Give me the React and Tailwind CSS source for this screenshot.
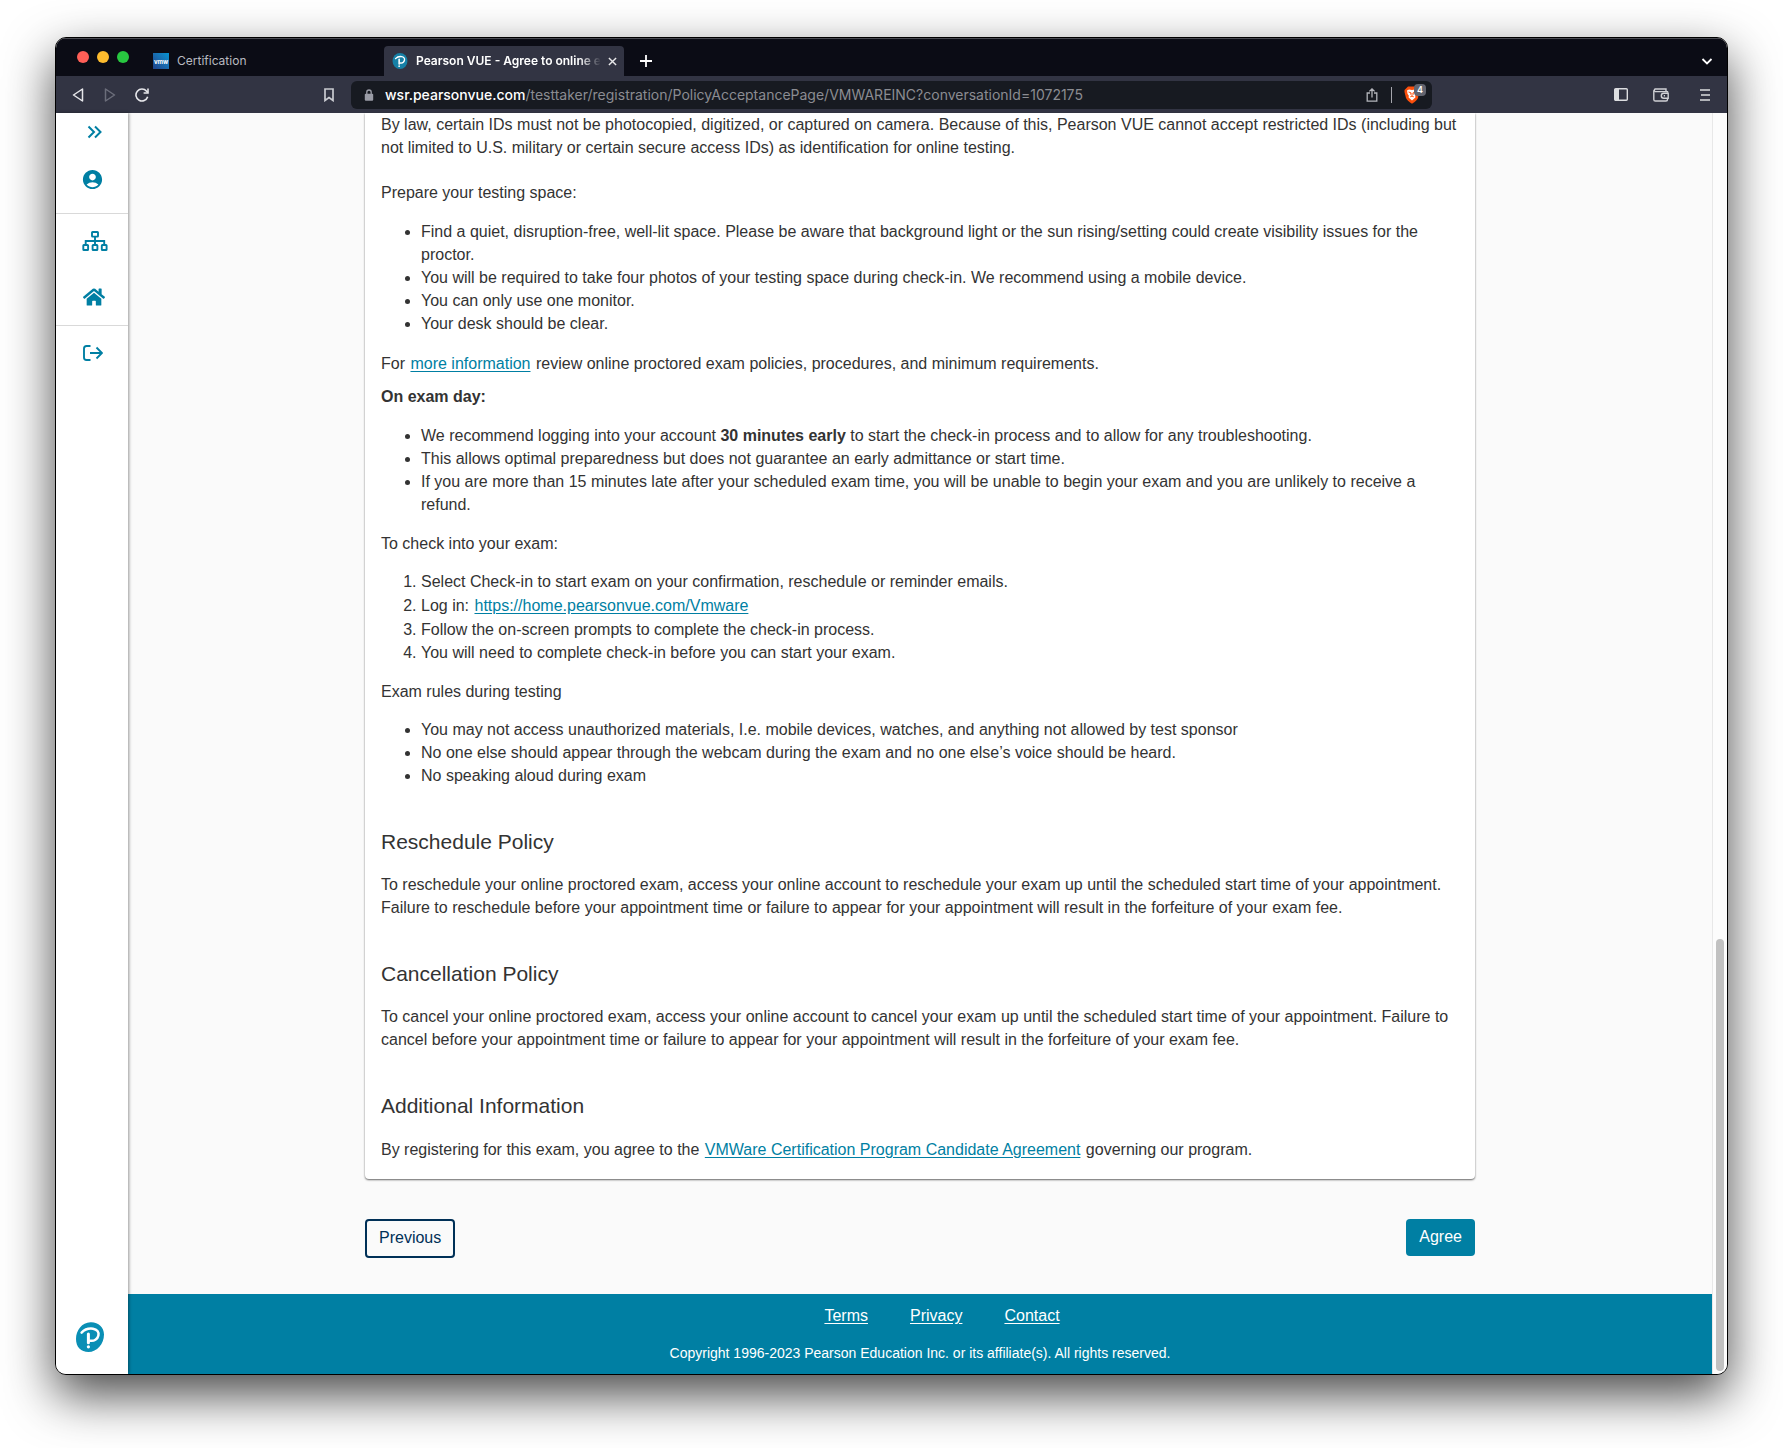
import React from "react";
import { FaHome } from "react-icons/fa";
import { MdAccountCircle } from "react-icons/md";

function PearsonMark({ className, tilted }) {
  return (
    <svg viewBox="0 0 28 30" className={className} aria-hidden="true">
      {tilted ? (
        <path d="M14.5 0.2C22 -0.2 28 5 28 12.5C28 22 21 30 12.5 30C5 30 0 25 0 17C0 8 6 0.6 14.5 0.2Z" fill="#0a8fb5" />
      ) : (
        <ellipse cx="14" cy="15" rx="14" ry="15" fill="#1680a6" />
      )}
      <path d="M5.6 10.6C8.600 7.400 13 6.200 17 6.700C21 7.300 23.200 10 22.400 13.400C21.600 17.200 18 19.400 14.200 18.700" fill="none" stroke="#fff" strokeWidth="2.5" strokeLinecap="round" />
      <path d="M12.4 12V20.800" stroke="#fff" strokeWidth="3" strokeLinecap="round" />
      <circle cx="12.4" cy="24.8" r="1.6" fill="#fff" />
    </svg>
  );
}

function TabStrip() {
  return (
    <div className="flex h-[38px] items-end border-t border-[#4a4b52] bg-[#0b0c15] pr-3">
      <div className="mb-[13px] ml-[21px] flex gap-2">
        <button aria-label="Close window" className="size-3 rounded-full bg-[#ff5f57]" />
        <button aria-label="Minimize window" className="size-3 rounded-full bg-[#febc2e]" />
        <button aria-label="Zoom window" className="size-3 rounded-full bg-[#28c840]" />
      </div>
      <button className="ml-6 flex h-[30px] w-[231px] items-center gap-2 text-left text-[12px] text-[#b9bac0]">
        <span className="flex size-4 items-center justify-center bg-linear-to-tr from-[#1d428a] to-[#0095d3] text-[6px] font-bold text-white">vmw</span>
        Certification
      </button>
      <div className="flex h-[30px] w-[240px] items-center rounded-t bg-[#323443] pr-[6px] pl-2">
        <button className="flex min-w-0 flex-1 items-center gap-2 text-left text-[12px] font-semibold text-white">
          <PearsonMark className="size-4 shrink-0" />
          <span className="whitespace-nowrap [mask-image:linear-gradient(to_right,#000_88%,transparent)]">Pearson VUE - Agree to online e</span>
        </button>
        <button aria-label="Close tab" className="flex w-3 shrink-0 justify-center">
          <svg viewBox="0 0 10 10" className="size-[9px]" stroke="#e8e8ea" strokeWidth="1.6"><path d="M1 1L9 9M9 1L1 9" /></svg>
        </button>
      </div>
      <button aria-label="New tab" className="mb-[9px] ml-4">
        <svg viewBox="0 0 12 12" className="size-3" stroke="#fff" strokeWidth="1.8"><path d="M6 0V12M0 6H12" /></svg>
      </button>
      <button aria-label="Search tabs" className="mr-[2px] mb-[9px] ml-auto">
        <svg viewBox="0 0 12 12" className="size-3" fill="none" stroke="#fff" strokeWidth="1.8"><path d="M1.5 4L6 8.5L10.5 4" /></svg>
      </button>
    </div>
  );
}

function Toolbar() {
  return (
    <div className="flex h-[37px] items-center bg-[#323443] pr-[13px] pl-4">
      <button aria-label="Back" className="w-3">
        <svg viewBox="0 0 12 14" className="h-[14px] w-3" fill="none" stroke="#e6e6ea" strokeWidth="1.5" strokeLinejoin="round"><path d="M10.5 1V13L1.5 7Z" /></svg>
      </button>
      <button aria-label="Forward" className="ml-5 w-3">
        <svg viewBox="0 0 12 14" className="h-[14px] w-3" fill="none" stroke="#6b6d7a" strokeWidth="1.5" strokeLinejoin="round"><path d="M1.5 1V13L10.5 7Z" /></svg>
      </button>
      <button aria-label="Reload" className="ml-[19px]">
        <svg viewBox="0 0 14 14" className="size-[14px]" fill="none" stroke="#e6e6ea" strokeWidth="1.6"><path d="M12.7 8.8A6 6 0 1 1 11.6 3.2L12.8 4.6" /><path d="M13 0.6V5H8.6" /></svg>
      </button>
      <button aria-label="Bookmark this page" className="ml-[174px]">
        <svg viewBox="0 0 12 14" className="h-[14px] w-3" fill="none" stroke="#c9cad0" strokeWidth="1.7"><path d="M2 1H10V12.5L6 9.6L2 12.5Z" /></svg>
      </button>
      <div className="ml-4 flex h-7 w-[1081px] items-center rounded-md bg-[#171a21] pr-[6px] pl-3">
        <svg viewBox="0 0 10 12" className="ml-px h-3 w-[10px]" aria-hidden="true"><rect x="0.8" y="4.8" width="8.4" height="7" rx="1" fill="#9a9ca6" /><path d="M2.8 5V3.2A2.2 2.2 0 0 1 7.2 3.2V5" fill="none" stroke="#9a9ca6" strokeWidth="1.3" /></svg>
        <div role="textbox" aria-label="Address" className="ml-[11px] min-w-0 flex-1 text-[14px] whitespace-nowrap text-[#8b8c92]">
          <span className="font-medium text-white">wsr.pearsonvue.com</span>/testtaker/registration/PolicyAcceptancePage/VMWAREINC?conversationId=1072175
        </div>
        <button aria-label="Share">
          <svg viewBox="0 0 12 14" className="h-[14px] w-3" fill="none" stroke="#b4b5bb" strokeWidth="1.3"><path d="M4 5H1.2V13.2H10.8V5H8M6 9.5V1M3.4 3.4L6 0.9L8.6 3.4" /></svg>
        </button>
        <span className="mr-3 ml-[13px] h-4 w-px bg-[#a5a6ad]" />
        <button aria-label="Brave Shields, 4 blocked" className="relative flex w-5 mr-[2px]">
          <svg viewBox="0 0 16 18" className="h-[18px] w-4"><path d="M4 0.5H12L15.5 4L15 6L14 12Q13 14.5 8 17.8Q3 14.5 2 12L0.5 6L0.5 4Z" fill="#fb4f0c" /><path d="M3 4.500L5 3.4L8 4L11 3.4L13 4.500L12.400 8L11.200 9.600L11.400 11.600L8 14.400L4.600 11.600L4.800 9.600L3.600 8Z" fill="#fff" /><path d="M4.5 6L7 6.8L6.4 8.6M11.5 6L9 6.8L9.6 8.6M8 7V10.4M6.2 10.8L8 10.2L9.8 10.8" fill="none" stroke="#fb4f0c" strokeWidth="0.9" /></svg>
          <span className="absolute -top-[2px] left-[10px] flex size-3 items-center justify-center rounded bg-[#62646f] text-[9px] font-semibold text-white">4</span>
        </button>
      </div>
      <button aria-label="Side panel" className="ml-auto">
        <svg viewBox="0 0 14 13" className="h-[13px] w-[14px]"><rect x="0.7" y="0.7" width="12.6" height="11.6" rx="1" fill="none" stroke="#dcdde0" strokeWidth="1.4" /><rect x="1" y="1" width="4" height="11" fill="#dcdde0" /></svg>
      </button>
      <button aria-label="Wallet" className="ml-[25px]">
        <svg viewBox="0 0 16 14" className="h-[14px] w-4" fill="none" stroke="#cfd0d5" strokeWidth="1.4"><path d="M14.5 4.8V3.6H2.2A1.4 1.4 0 0 1 2.2 1H13V3.6" /><path d="M0.8 2.2V11.4A1.6 1.6 0 0 0 2.4 13H13A1.5 1.5 0 0 0 14.5 11.5V10.4" /><path d="M15.2 5.2H10.8A2.5 2.5 0 0 0 10.8 10.2H15.2Z" /><path d="M10.8 7.7H12" /></svg>
      </button>
      <button aria-label="Menu" className="mr-1 ml-[31px]">
        <svg viewBox="0 0 10 12" className="h-3 w-[10px]" stroke="#dcdde0" strokeWidth="1.5"><path d="M0 1H10M1 6H10M0 11H10" /></svg>
      </button>
    </div>
  );
}

const sideButton = "flex w-full items-center pl-[26px]";

function Sidebar() {
  return (
    <nav aria-label="Main" className="relative z-10 flex w-[72px] shrink-0 flex-col bg-white text-[#007fa3] shadow-[1px_0_3px_rgba(0,0,0,0.4)]">
      <div className="flex h-[101px] flex-col border-b border-[#d9d9d9] pt-3">
        <button aria-label="Expand menu" className={sideButton}>
          <svg viewBox="0 0 16 14" className="ml-[5px] h-[14px] w-4" fill="none" stroke="currentColor" strokeWidth="2"><path d="M1.5 1.5L7 7L1.5 12.5M8 1.5L13.5 7L8 12.5" /></svg>
        </button>
        <button aria-label="Account" className={`mt-[29px] ${sideButton}`}>
          <MdAccountCircle className="-ml-px size-[23px]" />
        </button>
      </div>
      <div className="flex h-[112px] flex-col border-b border-[#d9d9d9] pt-[17px]">
        <button aria-label="Programs" className={sideButton}>
          <svg viewBox="0 0 26 20" className="h-5 w-[26px]" fill="none" stroke="currentColor" strokeWidth="1.9"><rect x="10" y="1" width="6" height="4.6" rx="0.6" /><rect x="1.3" y="14" width="4.8" height="5" rx="0.6" /><rect x="10.6" y="14" width="4.8" height="5" rx="0.6" /><rect x="19.8" y="14" width="4.8" height="5" rx="0.6" /><path d="M13 5.6V14M3.7 14V10H22.2V14" /></svg>
        </button>
        <button aria-label="Home" className={`mt-[35px] ${sideButton}`}>
          <FaHome className="ml-px size-[22px]" />
        </button>
      </div>
      <button aria-label="Sign out" className={`mt-[19px] ${sideButton}`}>
        <svg viewBox="0 0 20 16" className="ml-px h-4 w-5" fill="none" stroke="currentColor" strokeWidth="1.9"><path d="M7.5 1H3.5Q1 1 1 3.5V12.5Q1 15 3.5 15H7.5M7 8H19M13.5 2.5L19 8L13.5 13.5" /></svg>
      </button>
      <a href="#home" aria-label="Pearson" className="mt-auto mb-[22px] ml-5 block w-7">
        <PearsonMark tilted className="h-[30px] w-7" />
      </a>
    </nav>
  );
}

function TextLink({ children }) {
  return <a href="#link" className="mx-px text-[#007fa3] underline underline-offset-2">{children}</a>;
}

function Section({ title, children }) {
  return (
    <section className="mt-[39px] last:space-y-[17px] not-last:space-y-4">
      <h2 className="text-[21px] leading-[31px]">{title}</h2>
      <p>{children}</p>
    </section>
  );
}

function Policy() {
  return (
    <article className="rounded-b bg-white px-4 pb-[18px] text-[16px] leading-[23px] text-[#333] shadow-[0_1px_2px_rgba(0,0,0,0.6)]">
      <p>
        By law, certain IDs must not be photocopied, digitized, or captured on camera. Because of this, Pearson VUE cannot accept restricted IDs (including but not limited to U.S. military or certain secure access IDs) as identification for online testing.
      </p>
      <p className="mt-[22px]">Prepare your testing space:</p>
      <ul className="mt-4 list-disc pl-10">
        <li>Find a quiet, disruption-free, well-lit space. Please be aware that background light or the sun rising/setting could create visibility issues for the proctor.</li>
        <li>You will be required to take four photos of your testing space during check-in. We recommend using a mobile device.</li>
        <li>You can only use one monitor.</li>
        <li>Your desk should be clear.</li>
      </ul>
      <p className="mt-[17px]">
        For <TextLink>more information</TextLink> review online proctored exam policies, procedures, and minimum requirements.
      </p>
      <p className="mt-[10px] font-bold">On exam day:</p>
      <ul className="mt-4 list-disc pl-10">
        <li>We recommend logging into your account <b>30 minutes early</b> to start the check-in process and to allow for any troubleshooting.</li>
        <li>This allows optimal preparedness but does not guarantee an early admittance or start time.</li>
        <li>If you are more than 15 minutes late after your scheduled exam time, you will be unable to begin your exam and you are unlikely to receive a refund.</li>
      </ul>
      <p className="mt-4">To check into your exam:</p>
      <ol className="mt-[15px] list-decimal pl-10">
        <li className="leading-6">Select Check-in to start exam on your confirmation, reschedule or reminder emails.</li>
        <li className="leading-6">Log in: <TextLink>https://home.pearsonvue.com/Vmware</TextLink></li>
        <li>Follow the on-screen prompts to complete the check-in process.</li>
        <li>You will need to complete check-in before you can start your exam.</li>
      </ol>
      <p className="mt-4">Exam rules during testing</p>
      <ul className="mt-4 list-disc pl-10">
        <li className="leading-[22px]">You may not access unauthorized materials, I.e. mobile devices, watches, and anything not allowed by test sponsor</li>
        <li>No one else should appear through the webcam during the exam and no one else’s voice should be heard.</li>
        <li>No speaking aloud during exam</li>
      </ul>
      <Section title="Reschedule Policy">
        To reschedule your online proctored exam, access your online account to reschedule your exam up until the scheduled start time of your appointment. Failure to reschedule before your appointment time or failure to appear for your appointment will result in the forfeiture of your exam fee.
      </Section>
      <Section title="Cancellation Policy">
        To cancel your online proctored exam, access your online account to cancel your exam up until the scheduled start time of your appointment. Failure to cancel before your appointment time or failure to appear for your appointment will result in the forfeiture of your exam fee.
      </Section>
      <Section title="Additional Information">
        By registering for this exam, you agree to the <TextLink>VMWare Certification Program Candidate Agreement</TextLink> governing our program.
      </Section>
    </article>
  );
}

function Footer() {
  return (
    <footer className="h-20 bg-[#007fa3] pt-[10px] text-center text-white">
      <ul className="flex justify-center pl-[2px] text-[16px] leading-[23px]">
        {["Terms", "Privacy", "Contact"].map((label) => (
          <li key={label} className="ml-[42px]">
            <a href={"#" + label.toLowerCase()} className="underline underline-offset-2">{label}</a>
          </li>
        ))}
      </ul>
      <p className="mt-4 text-[14px] leading-5">Copyright 1996-2023 Pearson Education Inc. or its affiliate(s). All rights reserved.</p>
    </footer>
  );
}

export default function App() {
  return (
    <div className="flex min-h-screen flex-col overflow-hidden bg-white px-[55px] pt-[37px] pb-[73px] font-['Inter',sans-serif]">
      <div className="flex flex-1 flex-col overflow-hidden rounded-[11px] border border-black bg-white shadow-[0_20px_50px_rgba(0,0,0,0.72)]">
        <header>
          <TabStrip />
          <Toolbar />
        </header>
        <div className="flex flex-1 font-['Liberation_Sans',Arial,sans-serif]">
          <Sidebar />
          <div className="flex min-w-0 flex-1 flex-col bg-[#fafafa]">
            <main className="mx-auto flex w-full max-w-[1110px] flex-1 flex-col">
              <Policy />
              <div className="mt-10 mb-9 flex items-start justify-between text-[16px] leading-[23px]">
                <button className="rounded border-2 border-[#003057] px-3 pt-[5px] pb-[7px] text-[#003057]">Previous</button>
                <button className="rounded bg-[#007fa3] px-[13px] pt-[6px] pb-2 text-white">Agree</button>
              </div>
            </main>
            <Footer />
          </div>
          <div className="flex w-[15px] flex-col items-center justify-end border-l border-[#e8e8e8] bg-[#fcfcfc] pb-[3px]">
            <div className="h-[432px] w-2 rounded-full bg-[#c1c1c1]" />
          </div>
        </div>
      </div>
    </div>
  );
}
